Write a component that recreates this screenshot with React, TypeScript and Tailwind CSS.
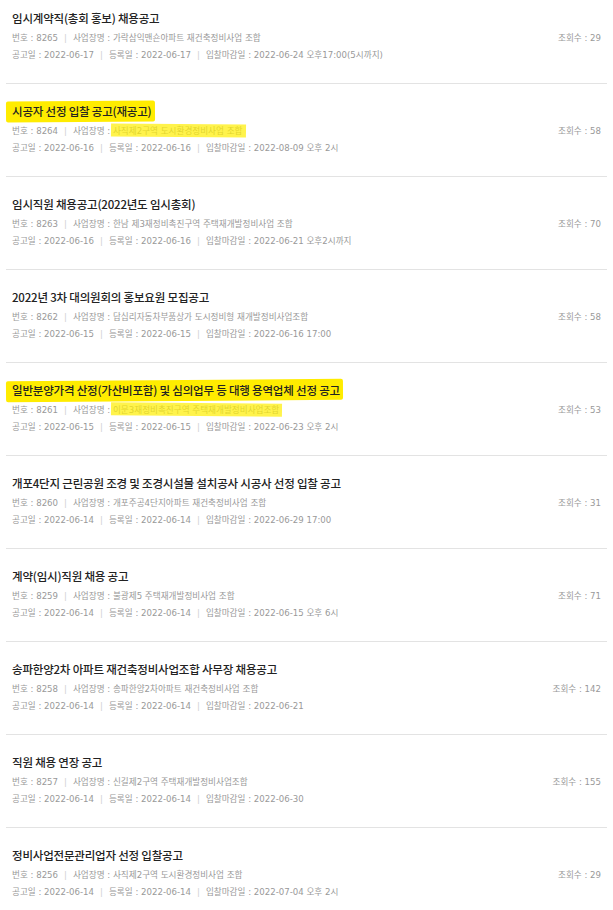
import React from "react";

type Notice = {
  id: number;
  title: string;
  site: string;
  views: number;
  posted: string;
  registered: string;
  deadline: string;
  marked?: boolean;
};

const notices: Notice[] = [
  { id: 8265, title: "임시계약직(총회 홍보) 채용공고", site: "가락삼익맨숀아파트 재건축정비사업 조합", views: 29, posted: "2022-06-17", registered: "2022-06-17", deadline: "2022-06-24 오후17:00(5시까지)" },
  { id: 8264, title: "시공자 선정 입찰 공고(재공고)", site: "사직제2구역 도시환경정비사업 조합", views: 58, posted: "2022-06-16", registered: "2022-06-16", deadline: "2022-08-09 오후 2시", marked: true },
  { id: 8263, title: "임시직원 채용공고(2022년도 임시총회)", site: "한남 제3재정비촉진구역 주택재개발정비사업 조합", views: 70, posted: "2022-06-16", registered: "2022-06-16", deadline: "2022-06-21 오후2시까지" },
  { id: 8262, title: "2022년 3차 대의원회의 홍보요원 모집공고", site: "답십리자동차부품상가 도시정비형 재개발정비사업조합", views: 58, posted: "2022-06-15", registered: "2022-06-15", deadline: "2022-06-16 17:00" },
  { id: 8261, title: "일반분양가격 산정(가산비포함) 및 심의업무 등 대행 용역업체 선정 공고", site: "이문3재정비촉진구역 주택재개발정비사업조합", views: 53, posted: "2022-06-15", registered: "2022-06-15", deadline: "2022-06-23 오후 2시", marked: true },
  { id: 8260, title: "개포4단지 근린공원 조경 및 조경시설물 설치공사 시공사 선정 입찰 공고", site: "개포주공4단지아파트 재건축정비사업 조합", views: 31, posted: "2022-06-14", registered: "2022-06-14", deadline: "2022-06-29 17:00" },
  { id: 8259, title: "계약(임시)직원 채용 공고", site: "불광제5 주택재개발정비사업 조합", views: 71, posted: "2022-06-14", registered: "2022-06-14", deadline: "2022-06-15 오후 6시" },
  { id: 8258, title: "송파한양2차 아파트 재건축정비사업조합 사무장 채용공고", site: "송파한양2차아파트 재건축정비사업 조합", views: 142, posted: "2022-06-14", registered: "2022-06-14", deadline: "2022-06-21" },
  { id: 8257, title: "직원 채용 연장 공고", site: "신길제2구역 주택재개발정비사업조합", views: 155, posted: "2022-06-14", registered: "2022-06-14", deadline: "2022-06-30" },
  { id: 8256, title: "정비사업전문관리업자 선정 입찰공고", site: "사직제2구역 도시환경정비사업 조합", views: 29, posted: "2022-06-14", registered: "2022-06-14", deadline: "2022-07-04 오후 2시" },
];

const Bar = () => <span className="mx-[6px] text-[#cfcfcf]">|</span>;

export default function App() {
  return (
    <div
      className="min-h-screen bg-white overflow-hidden"
      style={{ fontFamily: '"Noto Sans CJK KR", "Noto Sans", sans-serif' }}
    >
      <ul className="px-[6px] -mt-[9px]">
        {notices.map((n) => (
          <li key={n.id} className="border-b border-[#e3e3e3] pt-[17px] pb-[19px] px-[6px]">
            {/* title */}
            <div className="h-[16px] leading-[16px]">
              <span className="relative isolate inline-block text-[11.5px] font-medium text-[#222] tracking-[-0.2px]">
                {n.marked && (
                  <span className="absolute -z-10 -left-[6px] -right-[3px] -top-[2px] -bottom-[3px] bg-[#ffec00] -rotate-[0.4deg] rounded-[2px]" />
                )}
                {n.title}
              </span>
            </div>

            {/* meta */}
            <div
              className="mt-[6px] text-[8.6px] leading-[17px] text-[#999]"
              style={{ fontFamily: '"DejaVu Sans", "Noto Sans CJK KR", sans-serif' }}
            >
              <div className="flex justify-between">
                <div>
                  번호 : {n.id}
                  <Bar />
                  사업장명 :{" "}
                  <span className="relative">
                    {n.site}
                    {n.marked && (
                      <span className="absolute -left-[2px] -right-[3px] -top-[2px] -bottom-[1px] bg-[#ffee00]/70 rotate-[0.5deg]" />
                    )}
                  </span>
                </div>
                <div>조회수 : {n.views}</div>
              </div>
              <div>
                공고일 : {n.posted}
                <Bar />
                등록일 : {n.registered}
                <Bar />
                입찰마감일 : {n.deadline}
              </div>
            </div>
          </li>
        ))}
      </ul>
    </div>
  );
}
